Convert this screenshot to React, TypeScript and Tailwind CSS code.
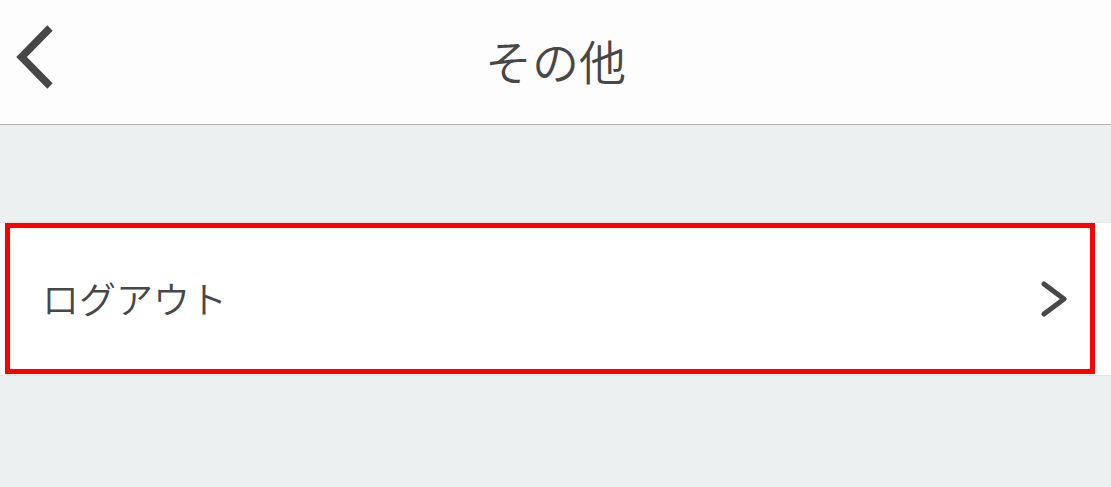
import React from "react";

function BackIcon() {
  return (
    <svg width="64" height="110" viewBox="0 0 64 110" className="block">
      <polyline
        points="50,28 21.5,57 50,86"
        fill="none"
        stroke="#474747"
        strokeWidth="7.5"
        strokeLinecap="butt"
        strokeLinejoin="miter"
      />
    </svg>
  );
}

function ChevronRight() {
  return (
    <svg width="30" height="40" viewBox="0 0 30 40" className="block">
      <polyline
        points="5,5 25,20 5,35"
        fill="none"
        stroke="#474747"
        strokeWidth="5"
        strokeLinecap="round"
        strokeLinejoin="round"
      />
    </svg>
  );
}

export default function App() {
  return (
    <div
      className="w-[1111px] h-[487px] overflow-hidden bg-[#edf0f1] flex flex-col"
      style={{ fontFamily: '"Noto Sans CJK JP", "Noto Sans", sans-serif' }}
    >
      {/* Header */}
      <header className="relative h-[125px] shrink-0 bg-[#fdfdfd] border-b border-[#b4b4b4] flex items-center justify-center">
        <button className="absolute left-0 top-0" aria-label="戻る">
          <BackIcon />
        </button>
        <h1 className="text-[47px] leading-none text-[#474747] font-[350] pb-[6px]">その他</h1>
      </header>

      <div className="h-[97px] shrink-0" />

      {/* Row */}
      <div className="relative h-[154px] shrink-0 bg-white border-y border-[#e2e4e5] flex items-center justify-between pl-[42px] pr-[42px]">
        <span className="text-[37px] leading-none text-[#474747] font-[350] pb-[2px]">ログアウト</span>
        <ChevronRight />
        <div className="absolute left-[5px] top-0 w-[1090px] h-[151px] border-[5px] border-[#ff0000] pointer-events-none" />
      </div>
    </div>
  );
}
